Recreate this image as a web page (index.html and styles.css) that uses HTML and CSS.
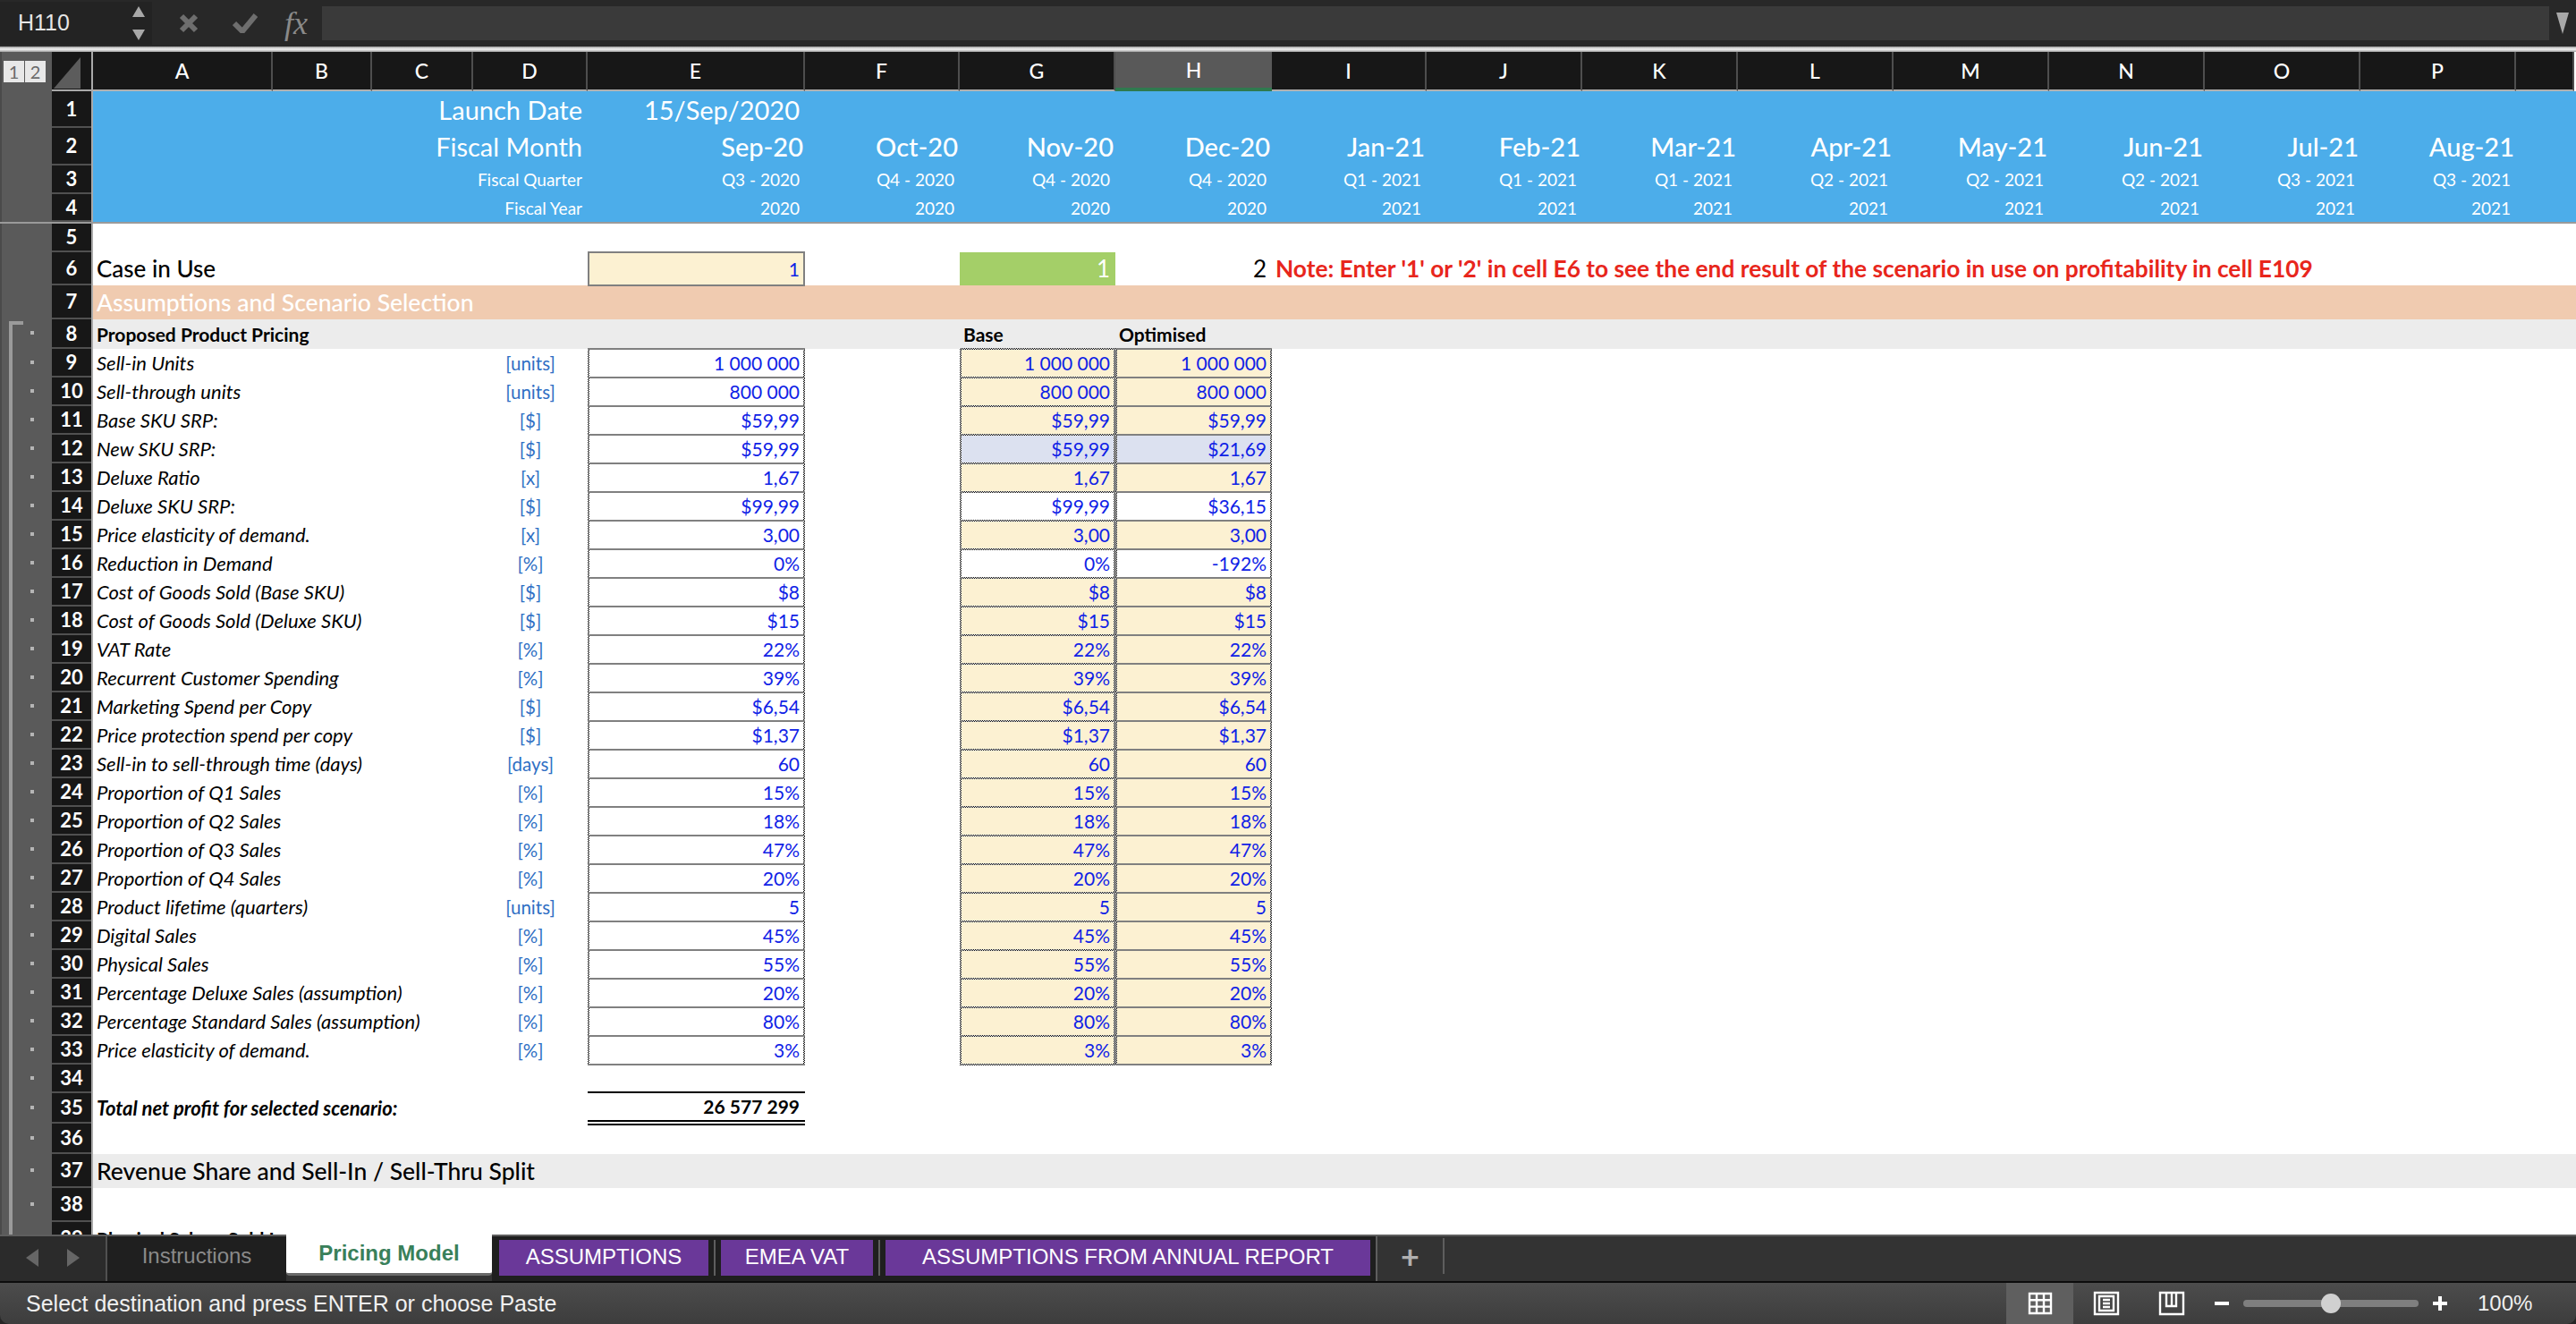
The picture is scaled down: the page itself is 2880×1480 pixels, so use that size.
FILE: index.html
```html
<!DOCTYPE html>
<html lang="en">

<head>
    <meta charset="utf8">
    <title>Pricing Model</title>
    <link rel="stylesheet" href="styles.css">
</head>

<body>
    <div class="window">
        <div class="formula-bar">
            <div class="name-box">
                <span class="cell-name">H110</span>
                <svg class="stepper" width="16" height="38" viewBox="0 0 16 38"><path d="M8 0l7 12H1zM8 38l-7-12h14z"/></svg>
            </div>
            <svg class="fx-icon" width="22" height="22" viewBox="0 0 22 22"><path d="M3 3l16 16M19 3L3 19"/></svg>
            <svg class="fx-icon" width="28" height="22" viewBox="0 0 28 22"><path d="M2 11l9 9L26 2"/></svg>
            <span class="fx">fx</span>
            <div class="formula-input"></div>
            <svg class="formula-more" width="14" height="24" viewBox="0 0 14 24"><path d="M0 0h14L7 24z"/></svg>
        </div>
        <div class="bar-line"></div>

        <div class="sheet">
            <div class="row col-head">
                <div class="gut"><span class="levels"><b>1</b><b>2</b></span></div>
                <div class="corner"><svg width="40" height="40" viewBox="0 0 40 40"><path d="M0 39L30 4v35z"/></svg></div>
                <div class="cells">
                    <div class="h a">A</div><div class="h b">B</div><div class="h c">C</div><div class="h d">D</div>
                    <div class="h e">E</div><div class="h f">F</div><div class="h g">G</div><div class="h sel">H</div>
                    <div class="h i">I</div><div class="h j">J</div><div class="h k">K</div><div class="h l">L</div>
                    <div class="h m">M</div><div class="h n">N</div><div class="h o">O</div><div class="h p">P</div>
                    <div class="h q"></div>
                </div>
            </div>

            <div class="row r1"><div class="gut"></div><div class="num">1</div>
                <div class="cells band">
                    <div class="t big to-e">Launch Date</div><div class="t big e">15/Sep/2020</div>
                </div>
            </div>
            <div class="row r2"><div class="gut"></div><div class="num">2</div>
                <div class="cells band">
                    <div class="t big to-e">Fiscal Month</div>
                    <div class="t month e">Sep-20</div><div class="t month f">Oct-20</div><div class="t month g">Nov-20</div><div class="t month h-col">Dec-20</div>
                    <div class="t month i">Jan-21</div><div class="t month j">Feb-21</div><div class="t month k">Mar-21</div><div class="t month l">Apr-21</div>
                    <div class="t month m">May-21</div><div class="t month n">Jun-21</div><div class="t month o">Jul-21</div><div class="t month p">Aug-21</div>
                </div>
            </div>
            <div class="row r3"><div class="gut"></div><div class="num">3</div>
                <div class="cells band">
                    <div class="t small to-e">Fiscal Quarter</div>
                    <div class="t small e">Q3 - 2020</div><div class="t small f">Q4 - 2020</div><div class="t small g">Q4 - 2020</div><div class="t small h-col">Q4 - 2020</div>
                    <div class="t small i">Q1 - 2021</div><div class="t small j">Q1 - 2021</div><div class="t small k">Q1 - 2021</div><div class="t small l">Q2 - 2021</div>
                    <div class="t small m">Q2 - 2021</div><div class="t small n">Q2 - 2021</div><div class="t small o">Q3 - 2021</div><div class="t small p">Q3 - 2021</div>
                </div>
            </div>
            <div class="row r4"><div class="gut"></div><div class="num">4</div>
                <div class="cells band">
                    <div class="t small to-e">Fiscal Year</div>
                    <div class="t small e">2020</div><div class="t small f">2020</div><div class="t small g">2020</div><div class="t small h-col">2020</div>
                    <div class="t small i">2021</div><div class="t small j">2021</div><div class="t small k">2021</div><div class="t small l">2021</div>
                    <div class="t small m">2021</div><div class="t small n">2021</div><div class="t small o">2021</div><div class="t small p">2021</div>
                </div>
            </div>
            <div class="row"><div class="gut"></div><div class="num">5</div><div class="cells"></div></div>
            <div class="row r6"><div class="gut"></div><div class="num">6</div>
                <div class="cells">
                    <div class="title case a-wide">Case in Use</div>
                    <div class="val box cream e">1</div>
                    <div class="val green g">1</div>
                    <div class="val plain h-col">2</div>
                    <div class="note i-wide">Note: Enter '1' or '2' in cell E6 to see the end result of the scenario in use on profitability in cell E109</div>
                </div>
            </div>
            <div class="row r7"><div class="gut"></div><div class="num">7</div>
                <div class="cells peach"><div class="title white a-wide">Assumptions and Scenario Selection</div></div>
            </div>
            <div class="row r8"><div class="gut dot bracket"></div><div class="num">8</div>
                <div class="cells grey">
                    <div class="strong a-wide">Proposed Product Pricing</div>
                    <div class="strong g">Base</div><div class="strong h-col">Optimised</div>
                </div>
            </div>

            <div class="row"><div class="gut dot"></div><div class="num">9</div><div class="cells"><div class="label a-wide">Sell-in Units</div><div class="unit d">[units]</div><div class="val box e">1 000 000</div><div class="val box cream g">1 000 000</div><div class="val box cream h-col">1 000 000</div></div></div>
            <div class="row"><div class="gut dot"></div><div class="num">10</div><div class="cells"><div class="label a-wide">Sell-through units</div><div class="unit d">[units]</div><div class="val box e">800 000</div><div class="val box cream g">800 000</div><div class="val box cream h-col">800 000</div></div></div>
            <div class="row"><div class="gut dot"></div><div class="num">11</div><div class="cells"><div class="label a-wide">Base SKU SRP:</div><div class="unit d">[$]</div><div class="val box e">$59,99</div><div class="val box cream g">$59,99</div><div class="val box cream h-col">$59,99</div></div></div>
            <div class="row"><div class="gut dot"></div><div class="num">12</div><div class="cells"><div class="label a-wide">New SKU SRP:</div><div class="unit d">[$]</div><div class="val box e">$59,99</div><div class="val box lilac g">$59,99</div><div class="val box lilac h-col">$21,69</div></div></div>
            <div class="row"><div class="gut dot"></div><div class="num">13</div><div class="cells"><div class="label a-wide">Deluxe Ratio</div><div class="unit d">[x]</div><div class="val box e">1,67</div><div class="val box cream g">1,67</div><div class="val box cream h-col">1,67</div></div></div>
            <div class="row"><div class="gut dot"></div><div class="num">14</div><div class="cells"><div class="label a-wide">Deluxe SKU SRP:</div><div class="unit d">[$]</div><div class="val box e">$99,99</div><div class="val box g">$99,99</div><div class="val box h-col">$36,15</div></div></div>
            <div class="row"><div class="gut dot"></div><div class="num">15</div><div class="cells"><div class="label a-wide">Price elasticity of demand.</div><div class="unit d">[x]</div><div class="val box e">3,00</div><div class="val box cream g">3,00</div><div class="val box cream h-col">3,00</div></div></div>
            <div class="row"><div class="gut dot"></div><div class="num">16</div><div class="cells"><div class="label a-wide">Reduction in Demand</div><div class="unit d">[%]</div><div class="val box e">0%</div><div class="val box g">0%</div><div class="val box h-col">-192%</div></div></div>
            <div class="row"><div class="gut dot"></div><div class="num">17</div><div class="cells"><div class="label a-wide">Cost of Goods Sold (Base SKU)</div><div class="unit d">[$]</div><div class="val box e">$8</div><div class="val box cream g">$8</div><div class="val box cream h-col">$8</div></div></div>
            <div class="row"><div class="gut dot"></div><div class="num">18</div><div class="cells"><div class="label a-wide">Cost of Goods Sold (Deluxe SKU)</div><div class="unit d">[$]</div><div class="val box e">$15</div><div class="val box cream g">$15</div><div class="val box cream h-col">$15</div></div></div>
            <div class="row"><div class="gut dot"></div><div class="num">19</div><div class="cells"><div class="label a-wide">VAT Rate</div><div class="unit d">[%]</div><div class="val box e">22%</div><div class="val box cream g">22%</div><div class="val box cream h-col">22%</div></div></div>
            <div class="row"><div class="gut dot"></div><div class="num">20</div><div class="cells"><div class="label a-wide">Recurrent Customer Spending</div><div class="unit d">[%]</div><div class="val box e">39%</div><div class="val box cream g">39%</div><div class="val box cream h-col">39%</div></div></div>
            <div class="row"><div class="gut dot"></div><div class="num">21</div><div class="cells"><div class="label a-wide">Marketing Spend per Copy</div><div class="unit d">[$]</div><div class="val box e">$6,54</div><div class="val box cream g">$6,54</div><div class="val box cream h-col">$6,54</div></div></div>
            <div class="row"><div class="gut dot"></div><div class="num">22</div><div class="cells"><div class="label a-wide">Price protection spend per copy</div><div class="unit d">[$]</div><div class="val box e">$1,37</div><div class="val box cream g">$1,37</div><div class="val box cream h-col">$1,37</div></div></div>
            <div class="row"><div class="gut dot"></div><div class="num">23</div><div class="cells"><div class="label a-wide">Sell-in to sell-through time (days)</div><div class="unit d">[days]</div><div class="val box e">60</div><div class="val box cream g">60</div><div class="val box cream h-col">60</div></div></div>
            <div class="row"><div class="gut dot"></div><div class="num">24</div><div class="cells"><div class="label a-wide">Proportion of Q1 Sales</div><div class="unit d">[%]</div><div class="val box e">15%</div><div class="val box cream g">15%</div><div class="val box cream h-col">15%</div></div></div>
            <div class="row"><div class="gut dot"></div><div class="num">25</div><div class="cells"><div class="label a-wide">Proportion of Q2 Sales</div><div class="unit d">[%]</div><div class="val box e">18%</div><div class="val box cream g">18%</div><div class="val box cream h-col">18%</div></div></div>
            <div class="row"><div class="gut dot"></div><div class="num">26</div><div class="cells"><div class="label a-wide">Proportion of Q3 Sales</div><div class="unit d">[%]</div><div class="val box e">47%</div><div class="val box cream g">47%</div><div class="val box cream h-col">47%</div></div></div>
            <div class="row"><div class="gut dot"></div><div class="num">27</div><div class="cells"><div class="label a-wide">Proportion of Q4 Sales</div><div class="unit d">[%]</div><div class="val box e">20%</div><div class="val box cream g">20%</div><div class="val box cream h-col">20%</div></div></div>
            <div class="row"><div class="gut dot"></div><div class="num">28</div><div class="cells"><div class="label a-wide">Product lifetime (quarters)</div><div class="unit d">[units]</div><div class="val box e">5</div><div class="val box cream g">5</div><div class="val box cream h-col">5</div></div></div>
            <div class="row"><div class="gut dot"></div><div class="num">29</div><div class="cells"><div class="label a-wide">Digital Sales</div><div class="unit d">[%]</div><div class="val box e">45%</div><div class="val box cream g">45%</div><div class="val box cream h-col">45%</div></div></div>
            <div class="row"><div class="gut dot"></div><div class="num">30</div><div class="cells"><div class="label a-wide">Physical Sales</div><div class="unit d">[%]</div><div class="val box e">55%</div><div class="val box cream g">55%</div><div class="val box cream h-col">55%</div></div></div>
            <div class="row"><div class="gut dot"></div><div class="num">31</div><div class="cells"><div class="label a-wide">Percentage Deluxe Sales (assumption)</div><div class="unit d">[%]</div><div class="val box e">20%</div><div class="val box cream g">20%</div><div class="val box cream h-col">20%</div></div></div>
            <div class="row"><div class="gut dot"></div><div class="num">32</div><div class="cells"><div class="label a-wide">Percentage Standard Sales (assumption)</div><div class="unit d">[%]</div><div class="val box e">80%</div><div class="val box cream g">80%</div><div class="val box cream h-col">80%</div></div></div>
            <div class="row"><div class="gut dot"></div><div class="num">33</div><div class="cells"><div class="label a-wide">Price elasticity of demand.</div><div class="unit d">[%]</div><div class="val box e">3%</div><div class="val box cream g">3%</div><div class="val box cream h-col">3%</div></div></div>

            <div class="row"><div class="gut dot"></div><div class="num">34</div><div class="cells"></div></div>
            <div class="row r35"><div class="gut dot"></div><div class="num">35</div>
                <div class="cells">
                    <div class="label total a-wide">Total net profit for selected scenario:</div>
                    <div class="val sum e">26 577 299</div>
                </div>
            </div>
            <div class="row r35"><div class="gut dot"></div><div class="num">36</div><div class="cells"></div></div>
            <div class="row r37"><div class="gut dot"></div><div class="num">37</div>
                <div class="cells grey"><div class="title a-wide">Revenue Share and Sell-In / Sell-Thru Split</div></div>
            </div>
            <div class="row r37"><div class="gut dot"></div><div class="num">38</div><div class="cells"></div></div>
            <div class="row r37"><div class="gut dot"></div><div class="num">39</div>
                <div class="cells"><div class="strong a-wide">Physical Sales - Sold In</div></div>
            </div>
        </div>

        <div class="tab-bar">
            <div class="tab-nav">
                <svg width="14" height="20" viewBox="0 0 14 20"><path d="M14 0v20L0 10z"/></svg>
                <svg width="14" height="20" viewBox="0 0 14 20"><path d="M0 0v20l14-10z"/></svg>
            </div>
            <div class="tab muted">Instructions</div>
            <div class="tab active">Pricing Model</div>
            <div class="tab-dark">
                <div class="tab purple assumptions">ASSUMPTIONS</div>
                <div class="tab purple emea">EMEA VAT</div>
                <div class="tab purple annual">ASSUMPTIONS FROM ANNUAL REPORT</div>
            </div>
            <div class="tab-add">+</div>
        </div>

        <div class="status-bar">
            <span class="status-text">Select destination and press ENTER or choose Paste</span>
            <div class="view-btn on">
                <svg width="28" height="26" viewBox="0 0 28 26"><path d="M2 2h24v22H2zM10 2v22M18 2v22M2 9.3h24M2 16.6h24"/></svg>
            </div>
            <div class="view-btn">
                <svg width="30" height="28" viewBox="0 0 30 28"><path d="M2 2h26v24H2zM7 6h16v16H7zM11 10h8M11 14h8M11 18h8"/></svg>
            </div>
            <div class="view-btn">
                <svg width="30" height="28" viewBox="0 0 30 28"><path d="M2 2h26v24H2zM9 2v15h11V2M15 2v15"/></svg>
            </div>
            <div class="zoom-sign minus"></div>
            <div class="zoom-track"><div class="zoom-thumb"></div></div>
            <div class="zoom-sign plus"></div>
            <span class="zoom-value">100%</span>
        </div>
    </div>
</body>

</html>
```

FILE: styles.css
```css
* {
    box-sizing: border-box;
}

body {
    margin: 0;
    background-color: #8a8a8a;
    font-family: "Lato", "Liberation Sans", sans-serif;
    overflow: hidden;
}

.window {
    display: flex;
    flex-direction: column;
    width: 2880px;
    height: 1480px;
    background-color: #262626;
}

/* formula bar */

.formula-bar {
    display: flex;
    align-items: center;
    height: 52px;
    background-color: #282828;
}

.name-box {
    display: flex;
    align-items: center;
    justify-content: space-between;
    width: 170px;
    height: 48px;
    padding: 0 7px 0 20px;
    background-color: #232323;
    color: #e6e6e6;
    font-family: "Liberation Sans", sans-serif;
    font-size: 25px;
}

.stepper {
    fill: #a8a8a8;
}

.fx-icon {
    margin-left: 30px;
    fill: none;
    stroke: #6e6e6e;
    stroke-width: 6;
}

.fx-icon + .fx-icon {
    margin-left: 38px;
}

.fx {
    margin-left: 30px;
    width: 28px;
    color: #8a8a8a;
    font-family: "Liberation Serif", serif;
    font-style: italic;
    font-size: 36px;
}

.formula-input {
    flex-grow: 1;
    height: 38px;
    margin-left: 14px;
    background-color: #3a3a3a;
}

.formula-more {
    margin: 0 8px;
    fill: #a8a8a8;
}

.bar-line {
    height: 6px;
    background: linear-gradient(#9c9c9c, #f4f4f4 50%, #a0a0a0);
}

/* sheet */

.sheet {
    height: 1324px;
    overflow: hidden;
    background-color: #fff;
}

.row {
    display: flex;
    height: 32px;
}

.r1 { height: 41px; }
.r2 { height: 42px; }
.r4 { height: 33px; border-bottom: 2px solid #9a9a9a; }
.r6 { height: 37px; }
.r7 { height: 38px; }
.r8 { height: 33px; }
.r35 { height: 34px; }
.r37 { height: 38px; }

.gut {
    position: relative;
    flex: 0 0 58px;
    background-color: #5a5a5a;
    border-left: 2px solid #4a4a4a;
}

.dot:before {
    content: " ";
    position: absolute;
    top: calc(50% - 3px);
    left: 32px;
    width: 4px;
    height: 4px;
    background-color: #b5b5b5;
}

/* outline level line runs from row 8 down to the tab bar */
.bracket {
    z-index: 2;
}

.bracket:after {
    content: " ";
    position: absolute;
    top: 2px;
    left: 8px;
    width: 12px;
    height: 1040px;
    border-top: 4px solid #9a9a9a;
    border-left: 4px solid #9a9a9a;
}

.num {
    flex: 0 0 44px;
    display: flex;
    align-items: center;
    justify-content: center;
    background-color: #171717;
    border-bottom: 2px solid #505050;
    color: #fff;
    font-size: 22px;
    font-weight: 700;
}

.cells {
    flex-grow: 1;
    display: grid;
    grid-template-columns: [a] 201px [b] 111px [c] 113px [d] 128px [e] 243px [f] 173px [g] 174px [h] 175px [i] 173px [j] 174px [k] 174px [l] 174px [m] 174px [n] 174px [o] 174px [p] 174px [q] 65px;
    grid-template-rows: 100%;
    border-left: 2px solid #a9a9a9;
    white-space: nowrap;
}

.cells > div {
    grid-row: 1;
}

.a { grid-column: a; }
.b { grid-column: b; }
.c { grid-column: c; }
.d { grid-column: d; }
.e { grid-column: e; }
.f { grid-column: f; }
.g { grid-column: g; }
.h-col { grid-column: h; }
.i { grid-column: i; }
.j { grid-column: j; }
.k { grid-column: k; }
.l { grid-column: l; }
.m { grid-column: m; }
.n { grid-column: n; }
.o { grid-column: o; }
.p { grid-column: p; }
.q { grid-column: q; }
.sel { grid-column: h; }
.a-wide { grid-column: a / e; }
.to-e { grid-column: a / e; }
.i-wide { grid-column: i / q; }

/* column headers */

.col-head {
    height: 44px;
}

.levels {
    position: absolute;
    top: 10px;
    left: 2px;
    display: flex;
    column-gap: 1px;
}

.levels b {
    width: 23px;
    height: 24px;
    background-color: #e8e8e8;
    color: #6a6a6a;
    font-size: 20px;
    font-weight: 400;
    line-height: 24px;
    text-align: center;
}

.corner {
    flex: 0 0 44px;
    padding: 2px 0 0 2px;
    background-color: #171717;
    border-bottom: 2px solid #a9a9a9;
}

.corner svg {
    display: block;
    fill: #5c5c5c;
}

.h {
    display: flex;
    align-items: center;
    justify-content: center;
    background-color: #171717;
    border-right: 2px solid #4e4e4e;
    border-bottom: 2px solid #b0b0b0;
    color: #fff;
    font-size: 23px;
    font-weight: 500;
}

.h.sel {
    background-color: #595959;
    border-right: 0 none;
    border-bottom: 4px solid #2f7a4f;
}

/* cell text */

.band {
    background-color: #4cadea;
    color: #fff;
}

.t {
    display: flex;
    align-items: center;
    justify-content: flex-end;
    padding-right: 6px;
}

.big {
    font-size: 29px;
    font-weight: 400;
}

.month {
    padding-right: 2px;
    font-size: 29px;
    font-weight: 500;
}

.small {
    font-size: 19px;
    font-weight: 400;
}

.title {
    display: flex;
    align-items: center;
    padding-left: 4px;
    color: #000;
    font-size: 26.5px;
    font-weight: 500;
}

.title.case {
    font-size: 26px;
}

.title.white {
    color: #fff;
}

.strong {
    display: flex;
    align-items: center;
    padding-left: 4px;
    color: #000;
    font-size: 21px;
    font-weight: 700;
}

.label {
    display: flex;
    align-items: center;
    padding-left: 4px;
    color: #000;
    font-size: 22px;
    font-style: italic;
}

.total {
    font-weight: 700;
}

.unit {
    display: flex;
    align-items: center;
    justify-content: center;
    color: #2f6fc4;
    font-size: 20.5px;
}

.val {
    display: flex;
    align-items: center;
    justify-content: flex-end;
    padding-right: 6px;
    color: #0f22e6;
    font-size: 21px;
}

.note {
    display: flex;
    align-items: center;
    padding-left: 4px;
    color: #e8261c;
    font-size: 26.3px;
    font-weight: 700;
}

.val.plain {
    color: #000;
    font-size: 26px;
}

.val.green {
    background-color: #a4cf68;
    color: #fff;
    font-size: 26px;
}

.peach {
    background-color: #f0cbb0;
}

.grey {
    background-color: #ececec;
}

/* dotted cell borders, 1px checker pattern as excel draws them */
.box {
    --check: conic-gradient(#000 25%, #fff 0 50%, #000 0 75%, #fff 0);
    position: relative;
    z-index: 1;
    margin: -1px 0;
    background-image: var(--check), var(--check), var(--check), var(--check);
    background-size: 2px 2px;
    background-repeat: repeat-x, repeat-x, repeat-y, repeat-y;
    background-position: top, bottom, left, right;
    background-color: #fff;
}

.box.cream {
    background-color: #fcf1d2;
}

.box.lilac {
    background-color: #dce1f0;
}

.val.sum {
    margin: -2px 0;
    height: 38px;
    border-top: 2px solid #000;
    border-bottom: 6px double #000;
    color: #000;
    font-weight: 700;
}

/* sheet tabs */

.tab-bar {
    display: flex;
    height: 54px;
    background-color: #333;
    border-top: 2px solid #5e5e5e;
    border-bottom: 2px solid #0c0c0c;
}

.tab-nav {
    display: flex;
    align-items: center;
    justify-content: center;
    column-gap: 32px;
    flex: 0 0 120px;
    padding-bottom: 2px;
    background-color: #2b2b2b;
    border-right: 2px solid #505050;
}

.tab-nav svg {
    fill: #666;
}

.tab {
    display: flex;
    align-items: center;
    justify-content: center;
    font-family: "Liberation Sans", sans-serif;
    font-size: 24px;
}

.muted {
    flex: 0 0 200px;
    padding-bottom: 6px;
    background-color: #1f1f1f;
    color: #8a8a8a;
}

.active {
    flex: 0 0 230px;
    margin: -2px 0 6px;
    padding-bottom: 2px;
    background-color: #fff;
    border-bottom: 3px solid #6a6a6a;
    border-radius: 0 0 4px 4px;
    color: #39805a;
    font-weight: 700;
}

.tab-dark {
    display: flex;
    align-items: flex-start;
    column-gap: 14px;
    flex: 0 0 990px;
    padding: 4px 0 0 8px;
    background-color: #1f1f1f;
    border-right: 2px solid #5e5e5e;
}

.purple {
    height: 40px;
    padding-bottom: 2px;
    background-color: #6a3899;
    color: #fff;
    position: relative;
}

.purple + .purple:before {
    content: " ";
    position: absolute;
    top: 0;
    left: -8px;
    width: 2px;
    height: 40px;
    background-color: #5e5e5e;
}

.assumptions { width: 234px; }
.emea { width: 170px; }
.annual { width: 542px; }

.tab-add {
    display: flex;
    align-items: center;
    justify-content: center;
    width: 75px;
    height: 40px;
    margin-top: 2px;
    border-right: 2px solid #5e5e5e;
    color: #b0b0b0;
    font-size: 36px;
    font-weight: 700;
}

/* status bar */

.status-bar {
    display: flex;
    align-items: center;
    height: 46px;
    padding-left: 29px;
    background: linear-gradient(#4c4c4c, #3d3d3d);
    border-radius: 0 0 10px 10px;
    color: #f0f0f0;
    font-size: 24px;
}

.status-text {
    flex-grow: 1;
    font-family: "Liberation Sans", sans-serif;
    font-size: 25px;
}

.view-btn {
    display: flex;
    align-items: center;
    justify-content: center;
    width: 73px;
    height: 100%;
}

.view-btn.on {
    width: 75px;
    background-color: #5f5f5f;
}

.view-btn svg {
    fill: none;
    stroke: #fff;
    stroke-width: 2.4;
}

.zoom-sign {
    position: relative;
    width: 16px;
    height: 16px;
    margin-left: 12px;
}

.minus:before,
.plus:before,
.plus:after {
    content: " ";
    position: absolute;
    background-color: #fff;
}

.minus:before,
.plus:before {
    top: 6px;
    left: 0;
    width: 16px;
    height: 4px;
}

.plus:after {
    top: 0;
    left: 6px;
    width: 4px;
    height: 16px;
}

.zoom-track {
    position: relative;
    width: 196px;
    height: 8px;
    margin-left: 16px;
    border-radius: 4px;
    background-color: #7f7f7f;
}

.zoom-thumb {
    position: absolute;
    top: -7px;
    left: 87px;
    width: 22px;
    height: 22px;
    border-radius: 50%;
    background-color: #d0d0d0;
}

.plus {
    margin-left: 16px;
}

.zoom-value {
    width: 61px;
    margin: 0 49px 0 34px;
    font-family: "Liberation Sans", sans-serif;
    font-weight: 300;
}
```
